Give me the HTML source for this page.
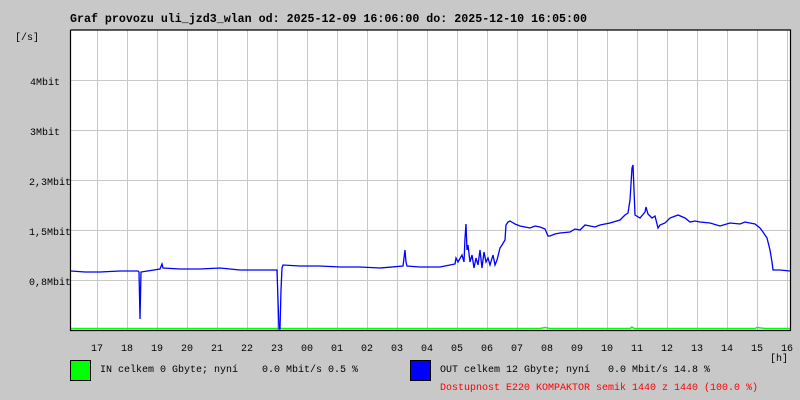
<!DOCTYPE html>
<html><head><meta charset="utf-8"><style>
html,body{margin:0;padding:0;background:#c8c8c8;}
svg{display:block}
text{font-family:"Liberation Mono","DejaVu Sans Mono",monospace;}
</style></head><body>
<svg width="800" height="400" xmlns="http://www.w3.org/2000/svg">
<rect width="800" height="400" fill="#c8c8c8"/>
<text x="70" y="22" font-size="11.5" font-weight="bold" textLength="517" lengthAdjust="spacingAndGlyphs">Graf provozu uli_jzd3_wlan od: 2025-12-09 16:06:00 do: 2025-12-10 16:05:00</text>
<rect x="70" y="30" width="720" height="300" fill="#fff"/>
<g stroke="#c8c8c8" stroke-width="1">
<path d="M97.5 30V330M127.5 30V330M157.5 30V330M187.5 30V330M217.5 30V330M247.5 30V330M277.5 30V330M307.5 30V330M337.5 30V330M367.5 30V330M397.5 30V330M427.5 30V330M457.5 30V330M487.5 30V330M517.5 30V330M547.5 30V330M577.5 30V330M607.5 30V330M637.5 30V330M667.5 30V330M697.5 30V330M727.5 30V330M757.5 30V330M787.5 30V330"/>
<path d="M70 80.5H790M70 130.5H790M70 180.5H790M70 230.5H790M70 280.5H790"/>
</g>
<polyline fill="none" stroke="#00ff00" stroke-width="1.5" points="71,328.5 540,328.5 545,327.5 550,328.5 630,328.5 632,327 634,328.5 755,328.5 757,327.5 765,328.5 790,328.5"/>
<polyline fill="none" stroke="#0000ff" stroke-width="1.3" points="71,271 85,272 100,272 120,271 138,271 139,272 140,319 141,272 160,269 162,264 163,268 180,269 200,269 220,268 240,270 260,270 277,270 278,300 279,329 280,329 281,290 282,268 283,265 300,266 320,266 340,267 360,267 380,268 403,266 404,258 405,250 406,262 407,266 420,267 440,267 455,264 456,258 458,262 462,255 464,262 465,238 466,224 467,250 468,245 470,262 472,255 474,268 476,258 478,265 480,250 482,268 484,252 486,262 488,258 490,265 493,255 495,265 497,260 500,248 502,245 505,240 506,225 508,222 510,221 515,224 520,226 530,228 535,226 540,227 545,229 548,236 550,236 555,234 560,233 570,232 575,229 580,230 585,225 590,226 595,227 600,225 610,223 620,220 625,215 628,213 630,200 632,168 633,165 634,190 635,215 640,218 645,212 646,207 648,214 652,218 655,216 658,228 660,225 665,223 670,218 678,215 685,218 690,222 695,221 700,222 710,223 720,226 730,223 740,224 745,222 755,224 760,228 763,232 767,238 770,250 772,262 773,270 780,270 790,271"/>
<path d="M70.5 30V330.5H790.5V30H70.5" fill="none" stroke="#000" stroke-width="1.2"/>
<g font-size="10" text-anchor="end">
<text x="60" y="85">4Mbit</text>
<text x="60" y="135">3Mbit</text>
<text x="71" y="185">2,3Mbit</text>
<text x="71" y="235">1,5Mbit</text>
<text x="71" y="285">0,8Mbit</text>
</g>
<text x="15" y="40" font-size="10">[/s]</text>
<g font-size="10" text-anchor="middle">
<text x="97" y="351">17</text><text x="127" y="351">18</text><text x="157" y="351">19</text><text x="187" y="351">20</text><text x="217" y="351">21</text><text x="247" y="351">22</text><text x="277" y="351">23</text><text x="307" y="351">00</text><text x="337" y="351">01</text><text x="367" y="351">02</text><text x="397" y="351">03</text><text x="427" y="351">04</text><text x="457" y="351">05</text><text x="487" y="351">06</text><text x="517" y="351">07</text><text x="547" y="351">08</text><text x="577" y="351">09</text><text x="607" y="351">10</text><text x="637" y="351">11</text><text x="667" y="351">12</text><text x="697" y="351">13</text><text x="727" y="351">14</text><text x="757" y="351">15</text><text x="787" y="351">16</text>
</g>
<text x="770" y="361" font-size="10">[h]</text>
<rect x="70.5" y="360.5" width="20" height="20" fill="#00ff00" stroke="#000"/>
<text x="100" y="372" font-size="10" xml:space="preserve">IN celkem 0 Gbyte; nyní    0.0 Mbit/s 0.5 %</text>
<rect x="410.5" y="360.5" width="20" height="20" fill="#0000ff" stroke="#000"/>
<text x="440" y="372" font-size="10" xml:space="preserve">OUT celkem 12 Gbyte; nyní   0.0 Mbit/s 14.8 %</text>
<text x="440" y="390" font-size="10" fill="#ff0000">Dostupnost E220 KOMPAKTOR semik 1440 z 1440 (100.0 %)</text>
</svg>
</body></html>
